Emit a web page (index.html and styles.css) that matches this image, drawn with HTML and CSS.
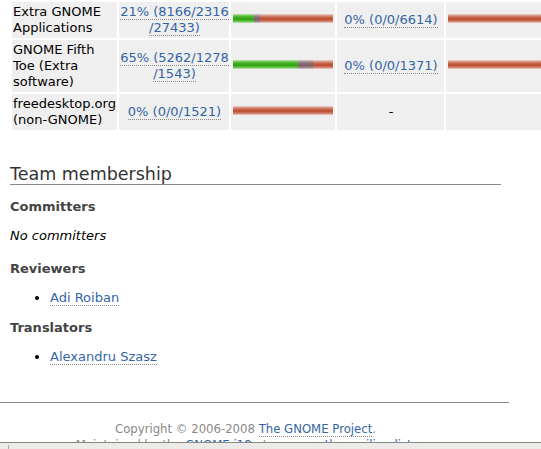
FILE: index.html
```html
<!DOCTYPE html>
<html lang="en">
<head>
    <meta charset="UTF-8">
    <title>Romanian team - GNOME translation statistics</title>
    <link rel="stylesheet" href="styles.css">
</head>
<body>
<div class="content">
    <table class="stats">
        <colgroup>
            <col class="module-col">
            <col class="ui-stats-col">
            <col class="ui-graph-col">
            <col class="doc-stats-col">
            <col class="doc-graph-col">
        </colgroup>
        <tr>
            <td class="module">Extra GNOME Applications</td>
            <td class="ui-stats"><a href="#">21% (8166/2316<wbr>/27433)</a></td>
            <td class="ui-graph">
                <div class="graph">
                    <span class="translated" style="width: 21px"></span>
                    <span class="fuzzy" style="width: 6px"></span>
                    <span class="untranslated" style="width: 73px"></span>
                </div>
            </td>
            <td class="doc-stats"><a href="#">0% (0/0/6614)</a></td>
            <td class="doc-graph">
                <div class="graph">
                    <span class="untranslated" style="width: 100px"></span>
                </div>
            </td>
        </tr>
        <tr>
            <td class="module">GNOME Fifth Toe (Extra software)</td>
            <td class="ui-stats"><a href="#">65% (5262/1278<wbr>/1543)</a></td>
            <td class="ui-graph">
                <div class="graph">
                    <span class="translated" style="width: 65px"></span>
                    <span class="fuzzy" style="width: 15px"></span>
                    <span class="untranslated" style="width: 20px"></span>
                </div>
            </td>
            <td class="doc-stats"><a href="#">0% (0/0/1371)</a></td>
            <td class="doc-graph">
                <div class="graph">
                    <span class="untranslated" style="width: 100px"></span>
                </div>
            </td>
        </tr>
        <tr>
            <td class="module">freedesktop.org (non-GNOME)</td>
            <td class="ui-stats"><a href="#">0% (0/0/1521)</a></td>
            <td class="ui-graph">
                <div class="graph">
                    <span class="untranslated" style="width: 100px"></span>
                </div>
            </td>
            <td class="doc-stats">-</td>
            <td class="doc-graph"></td>
        </tr>
    </table>

    <div class="team">
        <h2>Team membership</h2>
        <h3>Committers</h3>
        <p class="none">No committers</p>
        <h3>Reviewers</h3>
        <ul>
            <li><a href="#">Adi Roiban</a></li>
        </ul>
        <h3>Translators</h3>
        <ul>
            <li><a href="#">Alexandru Szasz</a></li>
        </ul>
    </div>
</div>

<div class="footer">
    <div class="footer-text">
        Copyright &copy; 2006-2008 <a href="#">The GNOME Project</a>.<br>
        Maintained by the <a href="#">GNOME i18n</a> team, see <a href="#">the mailing list</a>.
    </div>
</div>

<div class="hscroll"></div>
</body>
</html>
```

FILE: styles.css
```css
html {
    overflow: hidden;
}
body {
    margin: 0;
    font-family: "DejaVu Sans", "Bitstream Vera Sans", sans-serif;
    font-size: 13px;
    line-height: 16px;
    color: #000;
    background-color: #fff;
}
a {
    color: #3465a4;
    text-decoration: none;
    border-bottom: 1px dotted #888;
}
.content {
    width: 491px;
    margin-left: 10px;
}

/* statistics table */
.stats {
    table-layout: fixed;
    width: 549px;
    border-spacing: 2px;
}
.stats .module-col { width: 105px; }
.stats .ui-stats-col { width: 110px; }
.stats .ui-graph-col { width: 104px; }
.stats .doc-stats-col { width: 107px; }
.stats .doc-graph-col { width: 111px; }
.stats td {
    background-color: #efefef;
    padding: 2px 0 2px 1px;
    vertical-align: middle;
}
.stats .ui-stats,
.stats .doc-stats {
    text-align: center;
}
.graph {
    display: flex;
    width: 100px;
    height: 9px;
    margin: 0 0 3px 1px;
}
.graph span {
    display: block;
    height: 100%;
}
.graph .translated {
    background: linear-gradient(#c4e7b4 0%, #5cbf3e 22%, #37a818 45%, #35a516 62%, #70c657 85%, #cfebc2 100%);
}
.graph .fuzzy {
    background: linear-gradient(#dacfd1 0%, #9d848a 22%, #83646b 45%, #806168 62%, #9e878c 85%, #dfd5d7 100%);
}
.graph .untranslated {
    background: linear-gradient(#ebd5ce 0%, #d58a74 22%, #c15538 45%, #bf5336 62%, #d48c79 85%, #eed9d3 100%);
}

/* team */
.team h2 {
    font-size: 17.5px;
    font-weight: normal;
    line-height: 19px;
    color: #333;
    margin: 33px 0 0;
    border-bottom: 1px solid #888;
}
.team h3 {
    font-size: 13px;
    line-height: 16px;
    color: #444;
    margin: 14px 0 13px;
}
.team p.none {
    font-style: italic;
    margin: 0 0 17px;
}
.team ul {
    margin: 13px 0 14px;
    padding-left: 40px;
}

/* footer */
.footer {
    width: 509px;
    margin-top: 37px;
    border-top: 1px solid #888;
}
.footer-text {
    width: 491px;
    padding-top: 18px;
    font-size: 11.7px;
    text-align: center;
    color: #888;
}

/* horizontal scrollbar strip at the window bottom */
.hscroll {
    position: fixed;
    left: 0;
    right: 0;
    bottom: 0;
    height: 6px;
    border-top: 1px solid #8c8984;
    background-color: #ecebe8;
}
.hscroll::before {
    content: "";
    position: absolute;
    left: 8px;
    top: 2px;
    bottom: 0;
    width: 1px;
    background-color: #b0aca6;
}
```
